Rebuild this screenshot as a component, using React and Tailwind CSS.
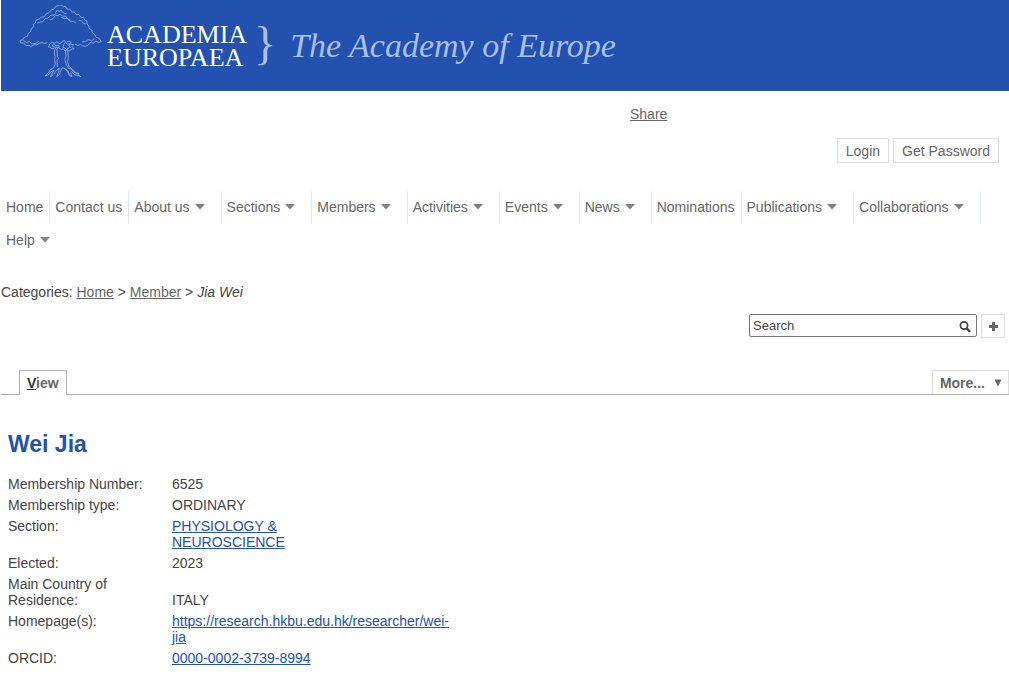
const menu = [
  { label: 'Home' },
  { label: 'Contact us' },
  { label: 'About us', sub: true },
  { label: 'Sections', sub: true },
  { label: 'Members', sub: true },
  { label: 'Activities', sub: true },
  { label: 'Events', sub: true },
  { label: 'News', sub: true },
  { label: 'Nominations' },
  { label: 'Publications', sub: true },
  { label: 'Collaborations', sub: true },
  { label: 'Help', sub: true },
];

const details = [
  { label: 'Membership Number:', value: '6525' },
  { label: 'Membership type:', value: 'ORDINARY' },
  { label: 'Section:', value: <>PHYSIOLOGY &amp;<br />NEUROSCIENCE</>, link: true },
  { label: 'Elected:', value: '2023' },
  { label: <>Main Country of<br />Residence:</>, value: 'ITALY' },
  { label: 'Homepage(s):', value: <>https://research.hkbu.edu.hk/researcher/wei-<br />jia</>, link: true },
  { label: 'ORCID:', value: '0000-0002-3739-8994', link: true },
];

const Tree = () => (
  <svg viewBox="54 15 252 222" className="w-[84px] h-[74px] shrink-0" fill="none" stroke="#94aee0" strokeWidth="2.6" strokeLinejoin="round" aria-hidden="true">
    {/* canopy */}
    <path d="M60 122l9-3 4-7 9-3 3-9 7-5 2-9 7-5-1-8 6-4 2-8 9-4 6-5 10-2 5-8 9-4 6-8 9-3 4-7 9-3 8-2 7 5 6-1 5 8 9 1 5 7 9 2 4 6 9 1 5 7 9 2 3 7 7 3 0 9 5 5 1 8 8 5 2 8 8 6 3 8 9 3 7 10-8 2-9-3-7 5-10-1-5 7-9 4-8-1-6-4-9 2-8-3" />
    <path d="M60 122l2 7 9 0 7 8 9-1 6 4 9-6 9 1 6-5 9-2 8 2 8-2" />
    <path d="M70 122l10 5 8-2 8 7 12-2 8-6M246 126l11-2 8-5 10 3 8-6" />
    <path d="M112 70l8-4 9-1 6-9 9-1 8-9 11-1 5-5M150 60l9-4 7-9 8-1 6-3 8 5 9 1 6 8 8 1M184 52l10 4 8-1 8 9 11 0 6 5M236 61l9 2 5 7 8 2M166 39l6-8 6 3 5-4 7 9 10 3" />
    {/* leaves above the trunk */}
    <path d="M149 132l8-6 6 5 8-6 6 6 7-2 3-5 8-2 5 5 7-4 6 4-1 6 9 1-5 6 6 6-9 2-4 5-7-4-7 4-4-6-8 1-7-5-6 5-7-4-8 3-4-6-6 0z" />
    <path d="M156 137l7-4 5 5 7-3 3 5-6 3-8-2zM191 134l5-6 6 5 7-2-2 7 5 4-8 2-4 5-5-5-6-2z" />
    {/* trunk and roots */}
    <path d="M164 148l-1 14 3 8-2 8 2 14-5 11-10 6-6 10-10 8M171 149l1 20 4 6-5 6 1 20M197 152l1 15-3 11 3 14 7 12 9 4 8 9 10 4 9 8M203 151l2 22-2 12 4 15 11 8 8 9 12 4" />
    <path d="M135 228l10-3 8-10 9-4-7 11-4 9 10-9 8-10 9-8-3 14-5 12 8-6 4-11 5-10 9 3 7 9 5 12M194 206l10 7 5 13 7 4-4-12M215 214l9 11 10 1 9 4" />
  </svg>
);

const Caret = () => (
  <svg viewBox="0 0 10 6" className="w-[10px] h-[6px] ml-[5px]" fill="#808080" aria-hidden="true">
    <path d="M0 0h10L5 5.5z" />
  </svg>
);

const Banner = () => (
  <header className="flex h-[91px] bg-[#2351b0] pl-[17px] pt-[5px] font-['Liberation_Serif',serif]">
    <Tree />
    <div className="ml-[5px] mt-[18px] text-[26px] leading-[23px] text-white">
      ACADEMIA<br />EUROPAEA
    </div>
    <span className="ml-[7px] mt-[16px] text-[46px] leading-[46px] text-[#a9bfe6]">{'}'}</span>
    <span className="ml-[14px] mt-[21px] text-[34px] leading-[40px] italic whitespace-nowrap text-[#a9bfe6]">The Academy of Europe</span>
  </header>
);

export default function App() {
  return (
    <div className="ml-px bg-white font-['Liberation_Sans',Arial,sans-serif] text-[14px] leading-4 text-[#444]">
      <Banner />

      <div className="pt-[15px] pl-[62.4%]">
        <a href="#share" className="text-[#666] underline">Share</a>
      </div>
      <div className="mt-4 flex justify-end gap-1 pr-[10px] text-[#666]">
        <button className="h-[25px] border border-[#ddd] px-2">Login</button>
        <button className="h-[25px] border border-[#ddd] px-2">Get Password</button>
      </div>

      <nav className="mt-7 flex flex-wrap text-[#666]">
        {menu.map((item) => (
          <a
            key={item.label}
            href="#menu"
            className={`flex h-[33px] items-center border-r pb-[2px] pl-[5px] whitespace-nowrap ${item.sub ? 'pr-4' : 'pr-[6px]'} ${item.label === 'Help' ? 'border-transparent' : 'border-[#d9ebf9]'}`}
          >
            {item.label}
            {item.sub && <Caret />}
          </a>
        ))}
      </nav>

      <div className="mt-[27px]">
        Categories: <a href="#home" className="text-[#666] underline">Home</a> &gt;{' '}
        <a href="#member" className="text-[#666] underline">Member</a> &gt; <em>Jia Wei</em>
      </div>

      <form className="mt-[14px] flex justify-end gap-1 pr-1">
        <div className="flex h-[23px] w-[228px] items-center rounded-[2px] border border-[#767676] pr-1">
          <input
            type="text"
            aria-label="Search"
            placeholder="Search"
            className="min-w-0 flex-1 pl-[3px] text-[13px] leading-4 outline-none placeholder:text-[#444]"
          />
          <button type="button" aria-label="Go">
            <svg viewBox="0 0 14 14" className="size-[14px]" fill="none" stroke="#444">
              <circle cx="6" cy="6.500" r="3.6" strokeWidth="1.7" />
              <path d="M8.6 9.300l3.4 3.6" strokeWidth="2.4" />
            </svg>
          </button>
        </div>
        <button type="button" aria-label="Advanced search" className="flex size-6 items-center justify-center border border-[#ddd]">
          <svg viewBox="0 0 9 9" className="size-[9px]" fill="#666">
            <path d="M3 0h3v3h3v3H6v3H3V6H0V3h3z" />
          </svg>
        </button>
      </form>

      <div className="mt-8 flex items-end justify-between border-b border-[#b0b0b0] pl-[18px] font-bold text-[#666]">
        <a href="#view" className="-mb-px h-[25px] border border-b-0 border-[#b0b0b0] bg-white px-[7px] pt-[4px]">
          <span className="text-[#333] underline">V</span>iew
        </a>
        <button className="flex h-6 items-center border border-b-0 border-[#ddd] pr-[6px] pl-[7px]">
          More...
          <svg viewBox="0 0 8 8" className="ml-[9px] size-2" fill="#666" aria-hidden="true">
            <path d="M0.500 0.500h7L4 7.500z" />
          </svg>
        </button>
      </div>

      <main className="pt-[35px] pl-[7px]">
        <h1 className="text-[23px] leading-7 font-bold text-[#2351b0]">Wei Jia</h1>
        <table className="mt-4 border-collapse text-left">
          <tbody>
            {details.map((row, i) => (
              <tr key={i}>
                <th scope="row" className="w-[164px] pt-[2px] pb-[3px] align-top font-normal">{row.label}</th>
                <td className={`pt-[2px] pb-[3px] ${row.link ? 'align-top' : 'align-bottom'}`}>
                  {row.link ? <a href="#link" className="text-[#2351b0] underline">{row.value}</a> : row.value}
                </td>
              </tr>
            ))}
          </tbody>
        </table>
      </main>
    </div>
  );
}
